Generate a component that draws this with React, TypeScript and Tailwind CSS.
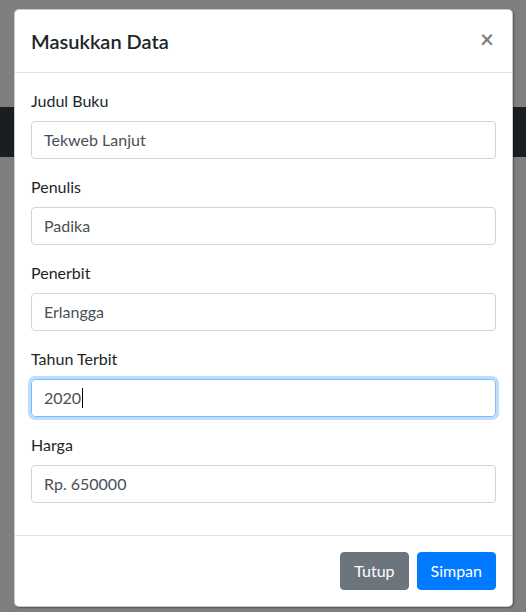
const fields = [
  { label: "Judul Buku", value: "Tekweb Lanjut" },
  { label: "Penulis", value: "Padika" },
  { label: "Penerbit", value: "Erlangga" },
  { label: "Tahun Terbit", value: "2020", focused: true },
  { label: "Harga", value: "Rp. 650000" },
];

const App = () => {
  return (
    <div
      className="relative h-[612px] w-full overflow-hidden bg-[#7f7f7f]"
      style={{ fontFamily: '"Segoe UI", Lato, "Noto Sans", Arial, sans-serif' }}
    >
      <div className="mt-[107px] h-[50px] bg-[#1b1e21]"></div>

      <div className="absolute left-[14px] top-[9px] w-[499px] rounded-[5px] border border-black/20 bg-white shadow-[1px_1px_2px_rgba(0,0,0,0.35)]">
        <div className="flex items-start justify-between border-b border-[#dee2e6] p-4">
          <h5 className="text-[20px] font-semibold leading-[30px] text-[#212529]">Masukkan Data</h5>
          <button className="mr-[2px] mt-[1px] text-[24px] font-bold leading-[24px] text-black/50">×</button>
        </div>

        <div className="p-4">
          {fields.map((f) => (
            <div key={f.label} className="mb-4">
              <label className="mb-2 block text-[16px] leading-6 text-[#212529]">{f.label}</label>
              <div
                className={
                  f.focused
                    ? "flex h-[38px] items-center rounded border border-[#80bdff] px-3 text-[16px] text-[#495057] shadow-[0_0_0_3px_rgba(0,123,255,0.25)]"
                    : "flex h-[38px] items-center rounded border border-[#ced4da] px-3 text-[16px] text-[#495057]"
                }
              >
                <span>{f.value}</span>
                {f.focused && <span className="ml-px h-[20px] w-px bg-black"></span>}
              </div>
            </div>
          ))}
        </div>

        <div className="flex justify-end gap-2 border-t border-[#dee2e6] py-4 pr-4">
          <button className="rounded border border-[#6c757d] bg-[#6c757d] px-[13px] py-[6px] text-[16px] leading-6 text-white">Tutup</button>
          <button className="rounded border border-[#007bff] bg-[#007bff] px-[13px] py-[6px] text-[16px] leading-6 text-white">Simpan</button>
        </div>
      </div>
    </div>
  );
};

export default App;
